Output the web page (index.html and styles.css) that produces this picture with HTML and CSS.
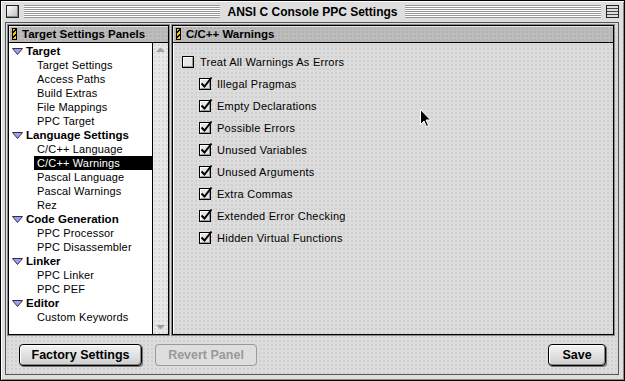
FILE: index.html
```html
<!DOCTYPE html>
<html lang="en">
<head>
  <meta charset="UTF-8">
  <title>ANSI C Console PPC Settings</title>
  <link rel="stylesheet" href="styles.css">
</head>
<body>

  <div class="window">
    <div class="titlebar">
      <span class="close-box"></span>
      <span class="stripes"></span>
      <span class="title">ANSI C Console PPC Settings</span>
      <span class="stripes"></span>
      <span class="collapse-box"></span>
    </div>

    <div class="content">
      <div class="panes">
        <div class="pane panel-list">
          <div class="pane-header"><span class="grip"></span>Target Settings Panels</div>
          <div class="list-wrap">
            <ul class="tree">
              <li class="group"><svg class="twisty" width="11" height="7" viewBox="0 0 11 7"><polygon points="0.5,0.5 10.5,0.5 5.5,6.5" fill="#9c9cff" stroke="#333" stroke-width="1"/></svg>Target</li>
              <li>Target Settings</li>
              <li>Access Paths</li>
              <li>Build Extras</li>
              <li>File Mappings</li>
              <li>PPC Target</li>
              <li class="group"><svg class="twisty" width="11" height="7" viewBox="0 0 11 7"><polygon points="0.5,0.5 10.5,0.5 5.5,6.5" fill="#9c9cff" stroke="#333" stroke-width="1"/></svg>Language Settings</li>
              <li>C/C++ Language</li>
              <li class="selected">C/C++ Warnings</li>
              <li>Pascal Language</li>
              <li>Pascal Warnings</li>
              <li>Rez</li>
              <li class="group"><svg class="twisty" width="11" height="7" viewBox="0 0 11 7"><polygon points="0.5,0.5 10.5,0.5 5.5,6.5" fill="#9c9cff" stroke="#333" stroke-width="1"/></svg>Code Generation</li>
              <li>PPC Processor</li>
              <li>PPC Disassembler</li>
              <li class="group"><svg class="twisty" width="11" height="7" viewBox="0 0 11 7"><polygon points="0.5,0.5 10.5,0.5 5.5,6.5" fill="#9c9cff" stroke="#333" stroke-width="1"/></svg>Linker</li>
              <li>PPC Linker</li>
              <li>PPC PEF</li>
              <li class="group"><svg class="twisty" width="11" height="7" viewBox="0 0 11 7"><polygon points="0.5,0.5 10.5,0.5 5.5,6.5" fill="#9c9cff" stroke="#333" stroke-width="1"/></svg>Editor</li>
              <li>Custom Keywords</li>
            </ul>
            <div class="scrollbar">
              <svg width="15" height="14" viewBox="0 0 15 14"><polygon points="3,9 12,9 7.5,4.5" fill="#a0a0a0"/></svg>
              <svg width="15" height="14" viewBox="0 0 15 14"><polygon points="3,5 12,5 7.5,9.5" fill="#a0a0a0"/></svg>
            </div>
          </div>
        </div>

        <div class="pane panel-main">
          <div class="pane-header"><span class="grip"></span>C/C++ Warnings</div>
          <div class="options">
            <label class="option">
              <svg class="box" width="14" height="14" viewBox="0 0 14 14"><rect x="0.5" y="2.5" width="11" height="11" fill="#e6e6e6" stroke="#000"/><path d="M1.5 12.5V3.5H10.5" fill="none" stroke="#fff"/><path d="M1.5 12.5H10.5V3.5" fill="none" stroke="#999"/></svg>
              Treat All Warnings As Errors
            </label>
            <label class="option sub">
              <svg class="box" width="14" height="14" viewBox="0 0 14 14"><rect x="0.5" y="2.5" width="11" height="11" fill="#e6e6e6" stroke="#000"/><path d="M1.5 12.5V3.5H10.5" fill="none" stroke="#fff"/><path d="M1.5 12.5H10.5V3.5" fill="none" stroke="#999"/><path d="M2.5 7.5L5.5 10.5L12.5 1.5" fill="none" stroke="#000" stroke-width="2"/></svg>
              Illegal Pragmas
            </label>
            <label class="option sub">
              <svg class="box" width="14" height="14" viewBox="0 0 14 14"><rect x="0.5" y="2.5" width="11" height="11" fill="#e6e6e6" stroke="#000"/><path d="M1.5 12.5V3.5H10.5" fill="none" stroke="#fff"/><path d="M1.5 12.5H10.5V3.5" fill="none" stroke="#999"/><path d="M2.5 7.5L5.5 10.5L12.5 1.5" fill="none" stroke="#000" stroke-width="2"/></svg>
              Empty Declarations
            </label>
            <label class="option sub">
              <svg class="box" width="14" height="14" viewBox="0 0 14 14"><rect x="0.5" y="2.5" width="11" height="11" fill="#e6e6e6" stroke="#000"/><path d="M1.5 12.5V3.5H10.5" fill="none" stroke="#fff"/><path d="M1.5 12.5H10.5V3.5" fill="none" stroke="#999"/><path d="M2.5 7.5L5.5 10.5L12.5 1.5" fill="none" stroke="#000" stroke-width="2"/></svg>
              Possible Errors
            </label>
            <label class="option sub">
              <svg class="box" width="14" height="14" viewBox="0 0 14 14"><rect x="0.5" y="2.5" width="11" height="11" fill="#e6e6e6" stroke="#000"/><path d="M1.5 12.5V3.5H10.5" fill="none" stroke="#fff"/><path d="M1.5 12.5H10.5V3.5" fill="none" stroke="#999"/><path d="M2.5 7.5L5.5 10.5L12.5 1.5" fill="none" stroke="#000" stroke-width="2"/></svg>
              Unused Variables
            </label>
            <label class="option sub">
              <svg class="box" width="14" height="14" viewBox="0 0 14 14"><rect x="0.5" y="2.5" width="11" height="11" fill="#e6e6e6" stroke="#000"/><path d="M1.5 12.5V3.5H10.5" fill="none" stroke="#fff"/><path d="M1.5 12.5H10.5V3.5" fill="none" stroke="#999"/><path d="M2.5 7.5L5.5 10.5L12.5 1.5" fill="none" stroke="#000" stroke-width="2"/></svg>
              Unused Arguments
            </label>
            <label class="option sub">
              <svg class="box" width="14" height="14" viewBox="0 0 14 14"><rect x="0.5" y="2.5" width="11" height="11" fill="#e6e6e6" stroke="#000"/><path d="M1.5 12.5V3.5H10.5" fill="none" stroke="#fff"/><path d="M1.5 12.5H10.5V3.5" fill="none" stroke="#999"/><path d="M2.5 7.5L5.5 10.5L12.5 1.5" fill="none" stroke="#000" stroke-width="2"/></svg>
              Extra Commas
            </label>
            <label class="option sub">
              <svg class="box" width="14" height="14" viewBox="0 0 14 14"><rect x="0.5" y="2.5" width="11" height="11" fill="#e6e6e6" stroke="#000"/><path d="M1.5 12.5V3.5H10.5" fill="none" stroke="#fff"/><path d="M1.5 12.5H10.5V3.5" fill="none" stroke="#999"/><path d="M2.5 7.5L5.5 10.5L12.5 1.5" fill="none" stroke="#000" stroke-width="2"/></svg>
              Extended Error Checking
            </label>
            <label class="option sub">
              <svg class="box" width="14" height="14" viewBox="0 0 14 14"><rect x="0.5" y="2.5" width="11" height="11" fill="#e6e6e6" stroke="#000"/><path d="M1.5 12.5V3.5H10.5" fill="none" stroke="#fff"/><path d="M1.5 12.5H10.5V3.5" fill="none" stroke="#999"/><path d="M2.5 7.5L5.5 10.5L12.5 1.5" fill="none" stroke="#000" stroke-width="2"/></svg>
              Hidden Virtual Functions
            </label>
          </div>
        </div>
      </div>

      <div class="footer">
        <button class="btn factory">Factory Settings</button>
        <button class="btn revert" disabled>Revert Panel</button>
        <span class="spacer"></span>
        <button class="btn save">Save</button>
      </div>
    </div>

    <!-- mouse pointer over the panel -->
    <svg class="cursor" width="12" height="19" viewBox="0 0 12 19">
      <path d="M0.5 0.5V15.5L4 12L6.5 17.5L8.5 16.5L6 11H10.5Z" fill="#000" stroke="#fff" stroke-width="1"/>
    </svg>
  </div>

</body>
</html>
```

FILE: styles.css
```css
* {
  margin: 0;
  padding: 0;
  box-sizing: border-box;
}

body {
  width: 625px;
  height: 381px;
  background: #fff;
  font-family: 'Liberation Sans', Arial, sans-serif;
  color: #000;
  overflow: hidden;
}

.window {
  position: relative;
  width: 625px;
  height: 381px;
  border: 1px solid #000;
  background: #dedede;
  box-shadow: inset 1px 1px 0 #fff, inset -1px -1px 0 #888;
  display: flex;
  flex-direction: column;
  padding: 0 5px 5px 4px;
}

/* title bar */
.titlebar {
  height: 21px;
  display: flex;
  align-items: center;
  gap: 5px;
  padding: 0 0 0 1px;
}

.close-box {
  width: 13px;
  height: 13px;
  border: 1px solid #222;
  background: linear-gradient(135deg, #fff, #bbb);
  box-shadow: inset -1px -1px 0 #888;
  flex: none;
}

.collapse-box {
  width: 13px;
  height: 13px;
  border: 1px solid #222;
  background: repeating-linear-gradient(to bottom, #ddd 0, #ddd 2px, #444 2px, #444 3px);
  flex: none;
}

.stripes {
  flex: 1;
  height: 13px;
  background: repeating-linear-gradient(to bottom, #999 0, #999 1px, #fff 1px, #fff 2px);
}

.title {
  font-weight: bold;
  font-size: 12px;
  padding: 0 2px;
  white-space: nowrap;
}

/* main area */
.content {
  flex: 1;
  border: 1px solid #555;
  background-color: #dcdcdc;
  background-image: radial-gradient(circle, #c8c8c8 0.6px, transparent 0.9px);
  background-size: 4px 4px;
  display: flex;
  flex-direction: column;
  padding: 2px 4px 0 2px;
}

.panes {
  display: flex;
  gap: 2px;
  height: 310px;
}

.pane {
  border: 1px solid #000;
  box-shadow: 0 0 0 1px #8a8a8a, inset 1px 1px 0 #fff;
  display: flex;
  flex-direction: column;
}

.panel-list {
  width: 161px;
  flex: none;
}

.panel-main {
  flex: 1;
  margin-left: 1px;
}

.pane-header {
  height: 17px;
  flex: none;
  display: flex;
  align-items: center;
  gap: 5px;
  padding-left: 3px;
  font-weight: bold;
  font-size: 11.5px;
  background-color: #bcbcbc;
  background-image: radial-gradient(circle, #aaa 0.6px, transparent 0.9px);
  background-size: 4px 4px;
  border-bottom: 1px solid #000;
  box-shadow: inset 1px 1px 0 #e4e4e4;
  white-space: nowrap;
}

.grip {
  width: 5px;
  height: 12px;
  border: 1px solid #000;
  background: repeating-linear-gradient(135deg, #f5c800 0, #f5c800 2px, #000 2px, #000 3.5px);
}

/* settings tree */
.list-wrap {
  flex: 1;
  display: flex;
  background: #fff;
}

.tree {
  flex: 1;
  list-style: none;
  padding-top: 1px;
  font-size: 11px;
  letter-spacing: 0.15px;
}

.tree li {
  height: 14px;
  line-height: 14px;
  padding-left: 28px;
  white-space: nowrap;
}

.tree li.group {
  padding-left: 3px;
  font-weight: bold;
  font-size: 11.5px;
  letter-spacing: 0;
  display: flex;
  align-items: center;
  gap: 3px;
}

.tree li.selected {
  background: #000;
  color: #fff;
  margin-left: 25px;
  padding-left: 3px;
}

.twisty {
  flex: none;
}

.scrollbar {
  width: 16px;
  flex: none;
  border-left: 1px solid #000;
  background-color: #e8e8e8;
  background-image: radial-gradient(circle, #cfcfcf 0.6px, transparent 0.9px);
  background-size: 4px 4px;
  display: flex;
  flex-direction: column;
  justify-content: space-between;
}

/* options */
.options {
  flex: 1;
  padding: 8px 0 0 9px;
}

.option {
  display: flex;
  align-items: center;
  gap: 4px;
  height: 22px;
  font-size: 11px;
  letter-spacing: 0.25px;
  white-space: nowrap;
}

.option.sub {
  padding-left: 17px;
}

.box {
  flex: none;
  margin-top: -2px;
}

/* buttons */
.footer {
  flex: 1;
  display: flex;
  align-items: center;
  padding: 0 8px 0 11px;
  gap: 13px;
}

.spacer {
  flex: 1;
}

.btn {
  height: 22px;
  border: 1px solid #000;
  border-radius: 4px;
  background: linear-gradient(#f4f4f4, #cfcfcf);
  box-shadow: inset 1px 1px 0 #fff, inset -1px -1px 0 #888, 1px 1px 0 #777;
  font-family: 'Liberation Sans', Arial, sans-serif;
  font-weight: bold;
  font-size: 12.5px;
  color: #000;
}

.factory {
  width: 123px;
}

.revert {
  width: 102px;
  color: #999;
  border-color: #999;
  background: #dedede;
  box-shadow: none;
}

.save {
  width: 58px;
}

.cursor {
  position: absolute;
  left: 419px;
  top: 108px;
}
```
